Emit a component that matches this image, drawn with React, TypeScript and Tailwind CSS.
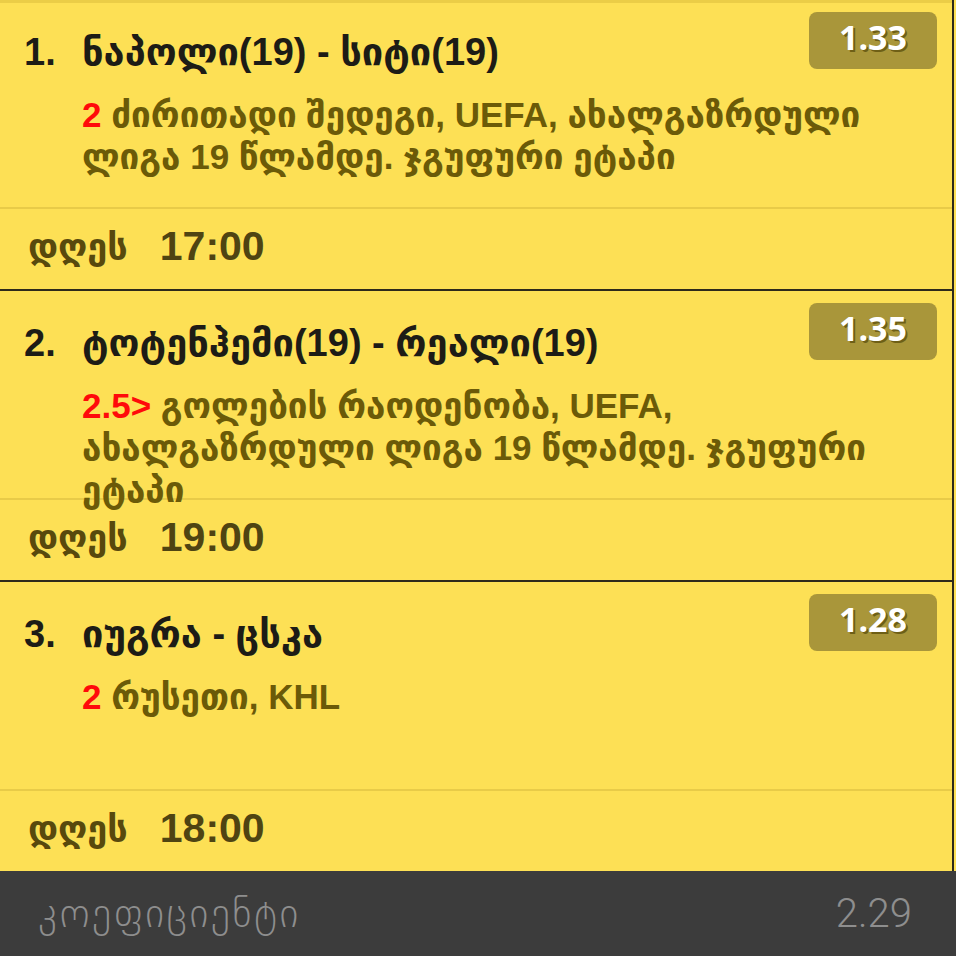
import React from "react";

type Bet = {
  n: string;
  title: string;
  pick: string;
  lines: string[];
  odd: string;
  time: string;
};

const bets: Bet[] = [
  {
    n: "1.",
    title: "ნაპოლი(19) - სიტი(19)",
    pick: "2",
    lines: ["ძირითადი შედეგი, UEFA, ახალგაზრდული", "ლიგა 19 წლამდე. ჯგუფური ეტაპი"],
    odd: "1.33",
    time: "17:00",
  },
  {
    n: "2.",
    title: "ტოტენჰემი(19) - რეალი(19)",
    pick: "2.5>",
    lines: ["გოლების რაოდენობა, UEFA,", "ახალგაზრდული ლიგა 19 წლამდე. ჯგუფური", "ეტაპი"],
    odd: "1.35",
    time: "19:00",
  },
  {
    n: "3.",
    title: "იუგრა - ცსკა",
    pick: "2",
    lines: ["რუსეთი, KHL"],
    odd: "1.28",
    time: "18:00",
  },
];

function Card({ bet, first, last }: { bet: Bet; first: boolean; last: boolean }) {
  return (
    <div className={last ? "" : "border-b-2 border-[#2e2a1a]"}>
      <div
        className={
          first
            ? "h-[207px] box-border border-t-[3px] border-[#ebcd47]"
            : "h-[207px] box-border"
        }
      >
        <div
          className={
            first
              ? "flex items-start justify-between pt-[9px] pr-[15px]"
              : "flex items-start justify-between pt-[12px] pr-[15px]"
          }
        >
          <div className="flex mt-[18px] pl-[24px] text-[38px] leading-[44px] font-bold text-[#1d1c16]">
            <span className="w-[58px]">{bet.n}</span>
            <span>{bet.title}</span>
          </div>
          <div className="w-[128px] h-[57px] rounded-[8px] bg-[#a9963a] flex items-center justify-center font-['Open_Sans',sans-serif] font-bold text-[34px] text-white [text-shadow:2px_2px_0_#6e5f16] pb-[6px]">
            {bet.odd}
          </div>
        </div>
        <div className="mt-[20px] pl-[82px] text-[35px] leading-[42px] font-semibold text-[#6b5a08] whitespace-nowrap">
          {bet.lines.map((l, i) => (
            <div key={i}>
              {i === 0 && <span className="text-[#ff0a0a] font-bold">{bet.pick} </span>}
              {l}
            </div>
          ))}
        </div>
      </div>
      <div className="h-[2px] bg-[#e8cb48]" />
      <div className="h-[80px] flex items-center pl-[28px] gap-[32px] pb-[4px]">
        <span className="text-[36px] font-semibold text-[#58490d]">დღეს</span>
        <span className="text-[41px] font-bold text-[#4f4412]">{bet.time}</span>
      </div>
    </div>
  );
}

export default function App() {
  return (
    <div className="w-[956px] h-[956px] overflow-hidden bg-[#fde055] font-['Liberation_Sans','DejaVu_Sans',sans-serif] flex flex-col">
      <div className="w-[954px] border-r-2 border-[#2e2a1a]">
        {bets.map((b, i) => (
          <Card key={i} bet={b} first={i === 0} last={i === bets.length - 1} />
        ))}
      </div>
      <div className="flex-1 bg-[#3c3c3c] flex items-center justify-between pl-[38px] pr-[44px] text-[#8e8e8e] font-['Roboto','DejaVu_Sans',sans-serif] font-light">
        <span className="text-[40px] tracking-[2.5px]">კოეფიციენტი</span>
        <span className="text-[40px]">2.29</span>
      </div>
    </div>
  );
}
